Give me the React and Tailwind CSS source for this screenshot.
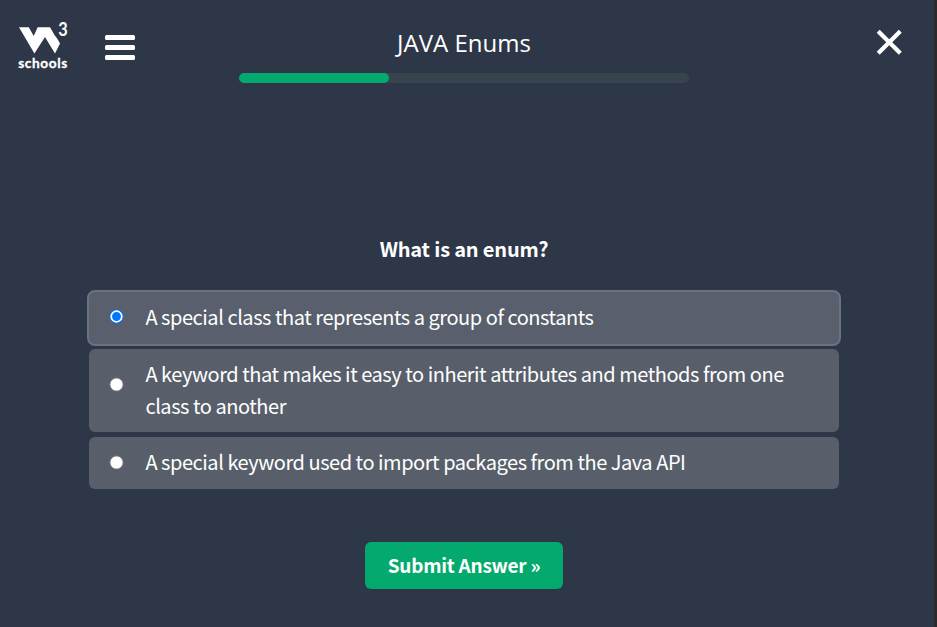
const options = [
  { text: 'A special class that represents a group of constants', selected: true },
  { text: 'A keyword that makes it easy to inherit attributes and methods from one class to another', tall: true },
  { text: 'A special keyword used to import packages from the Java API' },
];

function Logo() {
  return (
    <svg className="h-[60px] w-[60px] shrink-0" viewBox="0 -6 60 60" fill="#fff">
      <path d="M4 8.2H13.8L18.7 17L22.7 8.2H35L39.5 16L42.5 20L45 24.5L40 34.5L30 18L19.4 34.5Z" />
      <text x="43.2" y="17" fontSize="18" fontWeight="700" fontFamily="Lato, sans-serif" textLength="9.5" lengthAdjust="spacingAndGlyphs">3</text>
      <text x="3.2" y="49" fontSize="13.7" fontWeight="700" fontFamily="Lato, sans-serif" textLength="49" stroke="#fff" strokeWidth="0.3">schools</text>
    </svg>
  );
}

function Radio({ selected }) {
  return (
    <svg className="-ml-px mr-[21px] size-[15px] shrink-0" viewBox="0 0 15 15">
      {selected ? (
        <>
          <circle cx="7.5" cy="7.5" r="7" fill="#0075ff" />
          <circle cx="7.5" cy="7.5" r="5.3" fill="none" stroke="#fff" strokeWidth="1.7" />
        </>
      ) : (
        <circle cx="7.5" cy="7.5" r="6.6" fill="#fff" stroke="#767676" strokeWidth="0.9" />
      )}
    </svg>
  );
}

const boxes = {
  selected: '-mx-0.5 flex h-14 items-start rounded-[8px] border-2 border-[#6b7280] bg-[#595f6c] pl-[21px] pr-10 pt-[9px]',
  tall: 'flex h-[83px] items-start rounded-md bg-[#585f6b] pl-[21px] pr-10 pt-[9px]',
  plain: 'flex h-[52px] items-start rounded-md bg-[#585f6b] pl-[21px] pr-10 pt-[9px]',
};

function Option({ text, selected, tall }) {
  return (
    <label className={selected ? boxes.selected : tall ? boxes.tall : boxes.plain}>
      <span className={tall ? 'pt-[19px]' : selected ? 'pt-[7.5px]' : 'pt-[9px]'}>
        <Radio selected={selected} />
      </span>
      <span className="pl-[0.4px] text-[20px] leading-8 tracking-[-0.46px]">{text}</span>
    </label>
  );
}

export default function App() {
  return (
    <div className="flex h-[627px] w-[937px] overflow-hidden bg-[#2b2b2b] font-['Noto_Sans_CJK_SC',sans-serif] text-white">
      <main className="flex h-full w-[934px] flex-col bg-[#2e3748] pr-1.5">
        <header className="flex h-[83px] items-start">
          <div className="flex w-[239px] pl-[15px] pt-[13px]">
            <Logo />
            <div className="ml-[29.5px] mt-[22px] flex h-[25px] w-[30px] flex-col justify-between">
              <i className="h-[5px] rounded-[1.5px] bg-white" />
              <i className="h-[5px] rounded-[1.5px] bg-white" />
              <i className="h-[5px] rounded-[1.5px] bg-white" />
            </div>
          </div>
          <div className="flex h-[83px] w-[450px] flex-col">
            <h1 className="h-[73px] whitespace-nowrap pt-[27px] text-center font-['Open_Sans',sans-serif] text-[24px] leading-8">JAVA Enums</h1>
            <div className="h-2.5 rounded-full bg-[#38444d]">
              <div className="h-2.5 w-[150px] rounded-full bg-[#04aa6d]" />
            </div>
          </div>
          <svg className="ml-[187px] mt-[29px] size-[27px]" viewBox="0 0 27 27" stroke="#fff" strokeWidth="4.2">
            <path d="M2.2 2.2L24.3 24.3M24.3 2.2L2.2 24.3" />
          </svg>
        </header>
        <h2 className="mt-[150px] h-8 text-center text-[20px] font-bold leading-8 tracking-[-0.18px]">What is an enum?</h2>
        <form className="mx-auto mt-[25px] flex w-[750px] flex-col">
          <Option {...options[0]} />
          <div className="mt-[3px] flex flex-col gap-[5px]">
            <Option {...options[1]} />
            <Option {...options[2]} />
          </div>
        </form>
        <button className="mx-auto mt-[53px] h-[47px] w-[198px] rounded-md bg-[#04aa6d] text-[19px] font-bold tracking-[-0.25px]">Submit Answer »</button>
      </main>
    </div>
  );
}
